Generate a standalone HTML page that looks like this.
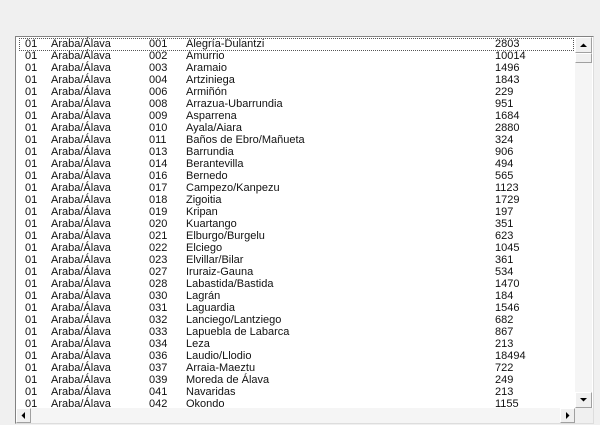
<!DOCTYPE html>
<html><head><meta charset="utf-8"><style>
body{margin:0;width:600px;height:425px;background:#f0f0f0;position:relative;overflow:hidden;font-family:"Liberation Sans",sans-serif;font-size:11px;color:#111}
#box{position:absolute;left:15px;top:36px;width:577px;height:386px;border:1px solid #828282;border-right-color:#ddd;border-bottom-color:#ddd;background:#fff;overflow:hidden}
.r{position:absolute;left:0;height:12px;line-height:12px;width:560px;white-space:nowrap}
.r span{position:absolute;top:0}
.a{left:9px}.b{left:35px}.c{left:133px}.d{left:170px}.e{left:479px}
#focus{position:absolute;left:3px;top:1px;width:553px;height:11px;border:1px dotted #555}
#vs{position:absolute;left:559px;top:0;width:17px;height:371px;background:#f5f5f5}
.btn{position:absolute;background:#f0f0f0;border:1px solid #fff;border-right-color:#a0a0a0;border-bottom-color:#a0a0a0;box-sizing:border-box}
#hs{position:absolute;left:0;top:371px;width:559px;height:15px;background:#f5f5f5}
#corner{position:absolute;left:559px;top:371px;width:18px;height:15px;background:#f0f0f0}
</style></head><body>
<div id="box">
<div id="rows"></div>
<div id="focus"></div>
<div id="vs">
<div class="btn" style="left:0;top:0;width:17px;height:16px"><svg width="15" height="14"><path d="M4 9h7L7.5 5.5z" fill="#000"/></svg></div>
<div class="btn" style="left:0;top:16px;width:17px;height:10px;border-color:#fff #a0a0a0 #a0a0a0 #fff"></div>
<div class="btn" style="left:0;top:355px;width:17px;height:16px"><svg width="15" height="14"><path d="M4 5h7L7.5 8.5z" fill="#000"/></svg></div>
</div>
<div id="hs">
<div class="btn" style="left:0;top:0;width:15px;height:15px"><svg width="13" height="13"><path d="M8 3v7L4.5 6.5z" fill="#000"/></svg></div>
<div class="btn" style="left:544px;top:0;width:15px;height:15px"><svg width="13" height="13"><path d="M5 3v7L8.5 6.5z" fill="#000"/></svg></div>
</div>
<div id="corner"></div>
</div>
<script>
var d=[["001","Alegría-Dulantzi",2803],["002","Amurrio",10014],["003","Aramaio",1496],["004","Artziniega",1843],["006","Armiñón",229],["008","Arrazua-Ubarrundia",951],["009","Asparrena",1684],["010","Ayala/Aiara",2880],["011","Baños de Ebro/Mañueta",324],["013","Barrundia",906],["014","Berantevilla",494],["016","Bernedo",565],["017","Campezo/Kanpezu",1123],["018","Zigoitia",1729],["019","Kripan",197],["020","Kuartango",351],["021","Elburgo/Burgelu",623],["022","Elciego",1045],["023","Elvillar/Bilar",361],["027","Iruraiz-Gauna",534],["028","Labastida/Bastida",1470],["030","Lagrán",184],["031","Laguardia",1546],["032","Lanciego/Lantziego",682],["033","Lapuebla de Labarca",867],["034","Leza",213],["036","Laudio/Llodio",18494],["037","Arraia-Maeztu",722],["039","Moreda de Álava",249],["041","Navaridas",213],["042","Okondo",1155]];
var h="";d.forEach(function(r,i){h+='<div class="r" style="top:'+(1+i*12)+'px"><span class="a">01</span><span class="b">Araba/Álava</span><span class="c">'+r[0]+'</span><span class="d">'+r[1]+'</span><span class="e">'+r[2]+'</span></div>';});
document.getElementById("rows").innerHTML=h;
</script>
</body></html>
